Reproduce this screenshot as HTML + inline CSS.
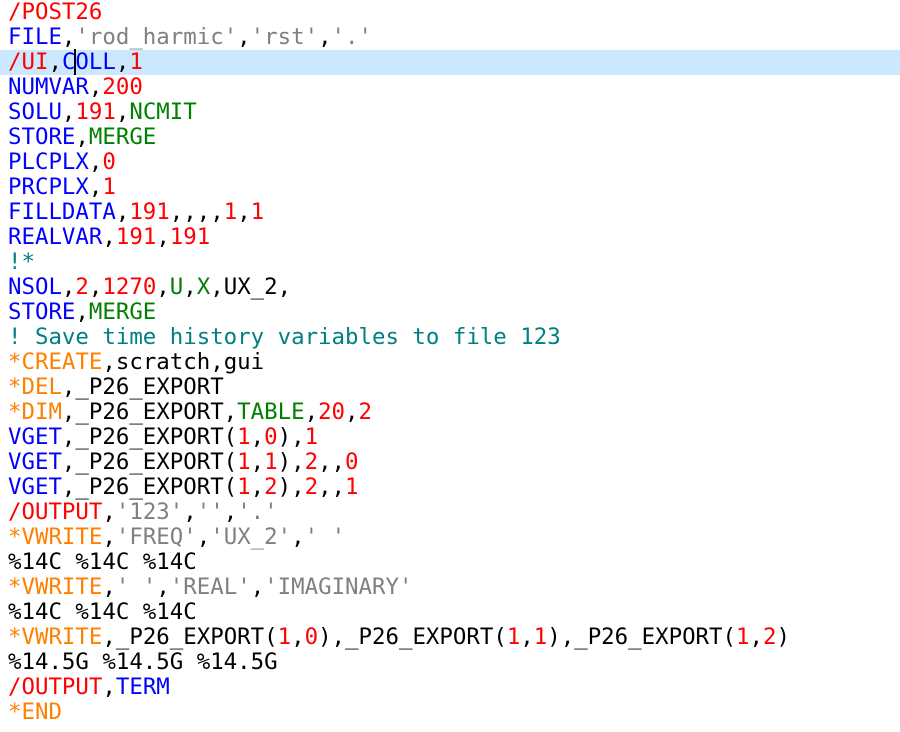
<!DOCTYPE html>
<html><head><meta charset="utf-8"><style>
html,body{margin:0;padding:0;background:#fff;width:900px;height:732px;overflow:hidden}
pre{margin:0;padding:0 0 0 8px;font-family:"DejaVu Sans Mono","Liberation Mono",monospace;font-size:22.4px;line-height:25px;color:#000;position:relative;top:0px}
.l{display:block;height:25px}
.hl{background:#cce8ff;margin-left:-8px;padding-left:8px}
.r{color:#ff0000}.b{color:#0000ff}.g{color:#008000}.s{color:#808080}.o{color:#ff8000}.c{color:#008080}
.cur{border-left:2px solid #000;margin-left:-1px;margin-right:-1px}
</style></head><body><pre><span class="l"><span class="r">/POST26</span></span><span class="l"><span class="b">FILE</span>,<span class="s">'rod_harmic'</span>,<span class="s">'rst'</span>,<span class="s">'.'</span></span><span class="l hl"><span class="r">/UI</span>,<span class="b">C<span class="cur"></span>OLL</span>,<span class="r">1</span></span><span class="l"><span class="b">NUMVAR</span>,<span class="r">200</span></span><span class="l"><span class="b">SOLU</span>,<span class="r">191</span>,<span class="g">NCMIT</span></span><span class="l"><span class="b">STORE</span>,<span class="g">MERGE</span></span><span class="l"><span class="b">PLCPLX</span>,<span class="r">0</span></span><span class="l"><span class="b">PRCPLX</span>,<span class="r">1</span></span><span class="l"><span class="b">FILLDATA</span>,<span class="r">191</span>,,,,<span class="r">1</span>,<span class="r">1</span></span><span class="l"><span class="b">REALVAR</span>,<span class="r">191</span>,<span class="r">191</span></span><span class="l"><span class="c">!*</span></span><span class="l"><span class="b">NSOL</span>,<span class="r">2</span>,<span class="r">1270</span>,<span class="g">U</span>,<span class="g">X</span>,UX_2,</span><span class="l"><span class="b">STORE</span>,<span class="g">MERGE</span></span><span class="l"><span class="c">! Save time history variables to file 123</span></span><span class="l"><span class="o">*CREATE</span>,scratch,gui</span><span class="l"><span class="o">*DEL</span>,_P26_EXPORT</span><span class="l"><span class="o">*DIM</span>,_P26_EXPORT,<span class="g">TABLE</span>,<span class="r">20</span>,<span class="r">2</span></span><span class="l"><span class="b">VGET</span>,_P26_EXPORT(<span class="r">1</span>,<span class="r">0</span>),<span class="r">1</span></span><span class="l"><span class="b">VGET</span>,_P26_EXPORT(<span class="r">1</span>,<span class="r">1</span>),<span class="r">2</span>,,<span class="r">0</span></span><span class="l"><span class="b">VGET</span>,_P26_EXPORT(<span class="r">1</span>,<span class="r">2</span>),<span class="r">2</span>,,<span class="r">1</span></span><span class="l"><span class="r">/OUTPUT</span>,<span class="s">'123'</span>,<span class="s">''</span>,<span class="s">'.'</span></span><span class="l"><span class="o">*VWRITE</span>,<span class="s">'FREQ'</span>,<span class="s">'UX_2'</span>,<span class="s">' '</span></span><span class="l">%14C %14C %14C</span><span class="l"><span class="o">*VWRITE</span>,<span class="s">' '</span>,<span class="s">'REAL'</span>,<span class="s">'IMAGINARY'</span></span><span class="l">%14C %14C %14C</span><span class="l"><span class="o">*VWRITE</span>,_P26_EXPORT(<span class="r">1</span>,<span class="r">0</span>),_P26_EXPORT(<span class="r">1</span>,<span class="r">1</span>),_P26_EXPORT(<span class="r">1</span>,<span class="r">2</span>)</span><span class="l">%14.5G %14.5G %14.5G</span><span class="l"><span class="r">/OUTPUT</span>,<span class="b">TERM</span></span><span class="l"><span class="o">*END</span></span></pre></body></html>
